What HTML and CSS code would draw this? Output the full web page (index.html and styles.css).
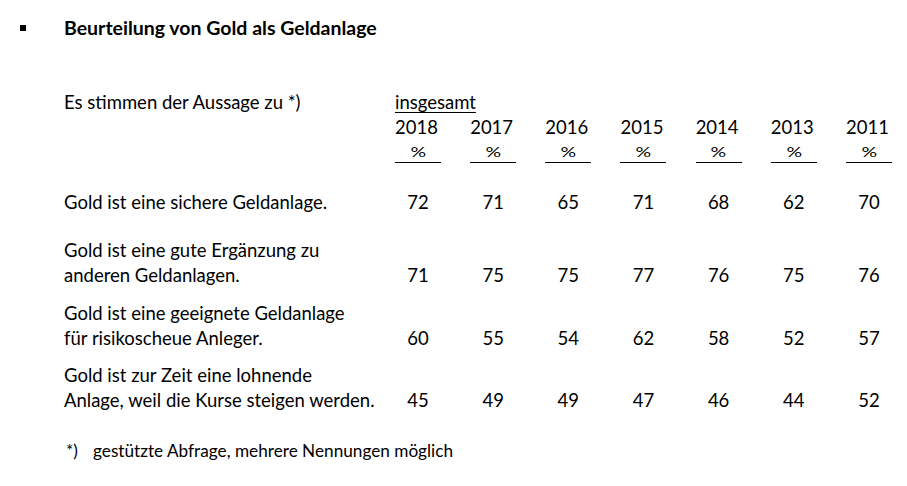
FILE: index.html
```html
<!DOCTYPE html>
<html lang="de">
<head>
<meta charset="utf-8">
<title>Beurteilung von Gold als Geldanlage</title>
<link rel="stylesheet" href="styles.css">
</head>
<body>
<h1 class="title"><span class="bullet"></span><span>Beurteilung von Gold als Geldanlage</span></h1>

<div class="table">
  <div class="row head">
    <div class="label">Es stimmen der Aussage zu *)</div>
    <div class="vals-head">
      <div class="total">insgesamt</div>
      <div class="vals">
        <div class="yr"><div class="year">2018</div><div class="pct"><span>%</span></div></div>
        <div class="yr"><div class="year">2017</div><div class="pct"><span>%</span></div></div>
        <div class="yr"><div class="year">2016</div><div class="pct"><span>%</span></div></div>
        <div class="yr"><div class="year">2015</div><div class="pct"><span>%</span></div></div>
        <div class="yr"><div class="year">2014</div><div class="pct"><span>%</span></div></div>
        <div class="yr"><div class="year">2013</div><div class="pct"><span>%</span></div></div>
        <div class="yr"><div class="year">2011</div><div class="pct"><span>%</span></div></div>
      </div>
    </div>
  </div>

  <div class="row data first">
    <div class="label">Gold ist eine sichere Geldanlage.</div>
    <div class="vals"><span>72</span><span>71</span><span>65</span><span>71</span><span>68</span><span>62</span><span>70</span></div>
  </div>
  <div class="row data">
    <div class="label">Gold ist eine gute Ergänzung zu<br>anderen Geldanlagen.</div>
    <div class="vals"><span>71</span><span>75</span><span>75</span><span>77</span><span>76</span><span>75</span><span>76</span></div>
  </div>
  <div class="row data">
    <div class="label">Gold ist eine geeignete Geldanlage<br>für risikoscheue Anleger.</div>
    <div class="vals"><span>60</span><span>55</span><span>54</span><span>62</span><span>58</span><span>52</span><span>57</span></div>
  </div>
  <div class="row data">
    <div class="label">Gold ist zur Zeit eine lohnende<br>Anlage, weil die Kurse steigen werden.</div>
    <div class="vals"><span>45</span><span>49</span><span>49</span><span>47</span><span>46</span><span>44</span><span>52</span></div>
  </div>
</div>

<div class="footnote"><span class="mark">*)</span><span>gestützte Abfrage, mehrere Nennungen möglich</span></div>
</body>
</html>
```
FILE: styles.css
```css
html, body {
  margin: 0;
  padding: 0;
  background: #fff;
}
body {
  width: 907px;
  height: 486px;
  overflow: hidden;
  font-family: Lato, "Open Sans", sans-serif;
  font-size: 18.5px;
  line-height: 25px;
  color: #000;
}

.title {
  display: flex;
  align-items: center;
  gap: 38px;
  margin: 0;
  padding: 15px 0 0 20px;
  font-size: 19.5px;
  font-weight: bold;
  line-height: 25px;
}
.bullet {
  width: 6px;
  height: 6px;
  background: #000;
  flex: none;
}

.table {
  margin-top: 50px;
  padding-left: 64px;
}
.row {
  display: flex;
}
.label {
  width: 331px;
  flex: none;
}
.vals {
  display: grid;
  grid-template-columns: repeat(7, 46px);
  column-gap: 29.17px;
}

.total {
  width: max-content;
  text-decoration: underline;
  text-decoration-thickness: 1px;
  text-underline-offset: 3px;
}
.yr {
  border-bottom: 1px solid #000;
}
.year {
  line-height: 27px;
  margin-top: -1px;
}
.pct {
  font-size: 13px;
  line-height: 19px;
  padding-top: 2px;
  text-align: center;
}
.pct span {
  display: inline-block;
  transform: scaleX(1.5);
}

.data {
  margin-top: 12.5px;
}
.data.first {
  margin-top: 26.5px;
  padding-bottom: 11px;
}
.data .vals {
  align-self: flex-end;
}
.data .vals span {
  text-align: center;
}

.footnote {
  display: flex;
  margin-top: 25px;
  padding-left: 64px;
  font-size: 17.2px;
  line-height: 25px;
}
.mark {
  width: 29px;
  flex: none;
  padding-left: 2px;
  box-sizing: border-box;
}
```
